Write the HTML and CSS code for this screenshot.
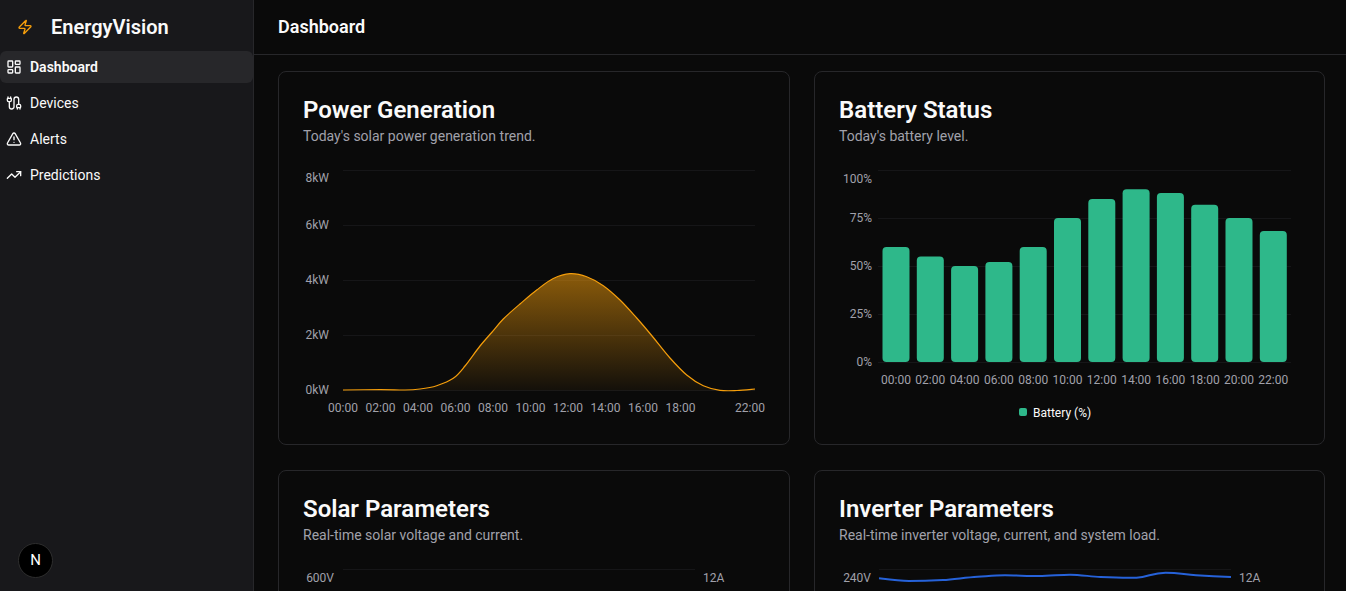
FILE: index.html
```html
<!DOCTYPE html>
<html lang="en">
<head>
    <meta charset="UTF-8">
    <meta name="viewport" content="width=device-width, initial-scale=1.0">
    <title>EnergyVision</title>
    <link rel="stylesheet" href="styles.css">
</head>
<body>
    <div class="app">
        <aside class="sidebar">
            <div class="brand">
                <svg class="brand-icon" viewBox="0 0 24 24"><path d="M4 14a1 1 0 0 1-.78-1.63l9.9-10.2a.5.5 0 0 1 .86.46l-1.92 6.02A1 1 0 0 0 13 10h7a1 1 0 0 1 .78 1.63l-9.9 10.2a.5.5 0 0 1-.86-.46l1.92-6.02A1 1 0 0 0 11 14z"/></svg>
                <span class="brand-name">EnergyVision</span>
            </div>
            <nav class="nav">
                <a class="nav-item active">
                    <svg class="nav-icon" viewBox="0 0 24 24"><rect width="7" height="9" x="3" y="3" rx="1"/><rect width="7" height="5" x="14" y="3" rx="1"/><rect width="7" height="9" x="14" y="12" rx="1"/><rect width="7" height="5" x="3" y="16" rx="1"/></svg>
                    Dashboard
                </a>
                <a class="nav-item">
                    <svg class="nav-icon" viewBox="0 0 24 24"><path d="M17 19a1 1 0 0 1-1-1v-2a2 2 0 0 1 2-2h2a2 2 0 0 1 2 2v2a1 1 0 0 1-1 1z"/><path d="M17 21v-2"/><path d="M19 14V6.5a1 1 0 0 0-7 0v11a1 1 0 0 1-7 0V10"/><path d="M21 21v-2"/><path d="M3 5V3"/><path d="M4 10a2 2 0 0 1-2-2V6a1 1 0 0 1 1-1h4a1 1 0 0 1 1 1v2a2 2 0 0 1-2 2z"/><path d="M7 5V3"/></svg>
                    Devices
                </a>
                <a class="nav-item">
                    <svg class="nav-icon" viewBox="0 0 24 24"><path d="m21.73 18-8-14a2 2 0 0 0-3.48 0l-8 14A2 2 0 0 0 4 21h16a2 2 0 0 0 1.73-3"/><path d="M12 9v4"/><path d="M12 17h.01"/></svg>
                    Alerts
                </a>
                <a class="nav-item">
                    <svg class="nav-icon" viewBox="0 0 24 24"><polyline points="22 7 13.5 15.5 8.5 10.5 2 17"/><polyline points="16 7 22 7 22 13"/></svg>
                    Predictions
                </a>
            </nav>
            <div class="next-badge">N</div>
        </aside>

        <div class="main">
            <header class="topbar">Dashboard</header>
            <div class="content">
                <section class="card">
                    <h2 class="card-title">Power Generation</h2>
                    <p class="card-desc">Today's solar power generation trend.</p>
                    <svg class="chart" viewBox="303 162 462 262">
                        <defs>
                            <linearGradient id="powerFill" x1="0" y1="0" x2="0" y2="1">
                                <stop offset="0" stop-color="#f59e0b" stop-opacity="0.55"/>
                                <stop offset="1" stop-color="#f59e0b" stop-opacity="0.04"/>
                            </linearGradient>
                        </defs>
                        <g class="grid">
                            <line x1="343" x2="755" y1="170.5" y2="170.5"/>
                            <line x1="343" x2="755" y1="225.5" y2="225.5"/>
                            <line x1="343" x2="755" y1="280.5" y2="280.5"/>
                            <line x1="343" x2="755" y1="335.5" y2="335.5"/>
                            <line x1="343" x2="755" y1="390.5" y2="390.5"/>
                        </g>
                        <path class="area" fill="url(#powerFill)" d="M343 390C349.25 390 370.2 389.6 380.5 389.6S398.4 390.1 405 390S414.7 389.7 420 389S431.2 387.5 436.7 385.7S448.6 381.6 453.3 378.3S460.6 371.4 465 366S475.5 351.6 480 346S487.8 337 491.7 332.5S498.6 323.75 503.3 319S514.4 308.8 520 304S531.1 294.25 536.7 290S547.7 281.2 553.3 278.5S564.4 274 570 273.7S581.2 274.7 586.7 276.7S597.8 281.8 603.3 285.7S614.4 294.6 620 300S631.1 311.75 636.7 318S647.8 330.8 653.3 337.5S664.4 351.75 670 358S681.2 370.4 686.7 375S697.7 383.2 703.3 385.7S714.4 389.5 720 390.3S731.2 390.7 737 390.5S752 389.25 755 389V390.5H343Z"/>
                        <path class="area-line" d="M343 390C349.25 390 370.2 389.6 380.5 389.6S398.4 390.1 405 390S414.7 389.7 420 389S431.2 387.5 436.7 385.7S448.6 381.6 453.3 378.3S460.6 371.4 465 366S475.5 351.6 480 346S487.8 337 491.7 332.5S498.6 323.75 503.3 319S514.4 308.8 520 304S531.1 294.25 536.7 290S547.7 281.2 553.3 278.5S564.4 274 570 273.7S581.2 274.7 586.7 276.7S597.8 281.8 603.3 285.7S614.4 294.6 620 300S631.1 311.75 636.7 318S647.8 330.8 653.3 337.5S664.4 351.75 670 358S681.2 370.4 686.7 375S697.7 383.2 703.3 385.7S714.4 389.5 720 390.3S731.2 390.7 737 390.5S752 389.25 755 389"/>
                        <g class="tick tick-y">
                            <text x="329" y="182">8kW</text>
                            <text x="329" y="229">6kW</text>
                            <text x="329" y="284">4kW</text>
                            <text x="329" y="339">2kW</text>
                            <text x="329" y="394">0kW</text>
                        </g>
                        <g class="tick tick-x">
                            <text x="343" y="412">00:00</text>
                            <text x="380.5" y="412">02:00</text>
                            <text x="418" y="412">04:00</text>
                            <text x="455.5" y="412">06:00</text>
                            <text x="493" y="412">08:00</text>
                            <text x="530.5" y="412">10:00</text>
                            <text x="568" y="412">12:00</text>
                            <text x="605.5" y="412">14:00</text>
                            <text x="643" y="412">16:00</text>
                            <text x="680.5" y="412">18:00</text>
                            <text x="750" y="412">22:00</text>
                        </g>
                    </svg>
                </section>

                <section class="card">
                    <h2 class="card-title">Battery Status</h2>
                    <p class="card-desc">Today's battery level.</p>
                    <svg class="chart" viewBox="839 162 461 262">
                        <g class="grid">
                            <line x1="878" x2="1291" y1="170.5" y2="170.5"/>
                            <line x1="878" x2="1291" y1="218.5" y2="218.5"/>
                            <line x1="878" x2="1291" y1="266.5" y2="266.5"/>
                            <line x1="878" x2="1291" y1="314.5" y2="314.5"/>
                            <line x1="878" x2="1291" y1="362.5" y2="362.5"/>
                        </g>
                        <g class="bars">
                            <rect x="882.5" y="247" width="27" height="115" rx="4"/>
                            <rect x="916.8" y="256.5" width="27" height="105.5" rx="4"/>
                            <rect x="951.1" y="266" width="27" height="96" rx="4"/>
                            <rect x="985.4" y="262" width="27" height="100" rx="4"/>
                            <rect x="1019.7" y="247" width="27" height="115" rx="4"/>
                            <rect x="1054" y="218" width="27" height="144" rx="4"/>
                            <rect x="1088.3" y="199" width="27" height="163" rx="4"/>
                            <rect x="1122.6" y="189.3" width="27" height="172.7" rx="4"/>
                            <rect x="1156.9" y="193" width="27" height="169" rx="4"/>
                            <rect x="1191.2" y="204.7" width="27" height="157.3" rx="4"/>
                            <rect x="1225.5" y="218" width="27" height="144" rx="4"/>
                            <rect x="1259.8" y="231" width="27" height="131" rx="4"/>
                        </g>
                        <g class="tick tick-y">
                            <text x="872" y="183">100%</text>
                            <text x="872" y="222">75%</text>
                            <text x="872" y="270">50%</text>
                            <text x="872" y="318">25%</text>
                            <text x="872" y="366">0%</text>
                        </g>
                        <g class="tick tick-x">
                            <text x="896" y="384">00:00</text>
                            <text x="930.3" y="384">02:00</text>
                            <text x="964.6" y="384">04:00</text>
                            <text x="998.9" y="384">06:00</text>
                            <text x="1033.2" y="384">08:00</text>
                            <text x="1067.5" y="384">10:00</text>
                            <text x="1101.8" y="384">12:00</text>
                            <text x="1136.1" y="384">14:00</text>
                            <text x="1170.4" y="384">16:00</text>
                            <text x="1204.7" y="384">18:00</text>
                            <text x="1239" y="384">20:00</text>
                            <text x="1273.3" y="384">22:00</text>
                        </g>
                        <rect class="legend-dot" x="1019" y="408" width="8" height="8" rx="2"/>
                        <text class="legend-label" x="1033" y="417">Battery (%)</text>
                    </svg>
                </section>

                <section class="card">
                    <h2 class="card-title">Solar Parameters</h2>
                    <p class="card-desc">Real-time solar voltage and current.</p>
                    <svg class="chart" viewBox="303 560 462 262">
                        <g class="grid">
                            <line x1="343" x2="695" y1="568.5" y2="568.5"/>
                        </g>
                        <g class="tick tick-y">
                            <text x="334" y="581">600V</text>
                        </g>
                        <text class="tick" x="703" y="581">12A</text>
                    </svg>
                </section>

                <section class="card">
                    <h2 class="card-title">Inverter Parameters</h2>
                    <p class="card-desc">Real-time inverter voltage, current, and system load.</p>
                    <svg class="chart" viewBox="839 560 461 262">
                        <g class="grid">
                            <line x1="879" x2="1231" y1="568.5" y2="568.5"/>
                        </g>
                        <path class="line-blue" d="M879 577.3C889 578.6 899 580 909 580S932 579.6 943 579S965 576.5 977.5 575.7S995 574.3 1005 574.3S1028 575 1039 575S1060 573.7 1070 573.7S1090 575.5 1100.6 576S1125 577 1136.5 576.7S1152 571.7 1165.6 571.7S1185 573.8 1196 574.3S1220 575.5 1231 576"/>
                        <g class="tick tick-y">
                            <text x="871" y="581">240V</text>
                        </g>
                        <text class="tick" x="1239" y="581">12A</text>
                    </svg>
                </section>
            </div>
        </div>
    </div>
</body>
</html>
```

FILE: styles.css
```css
* {
    box-sizing: border-box;
}

body {
    margin: 0;
    height: 100vh;
    overflow: hidden;
    font-family: Roboto, "Noto Sans", sans-serif;
    background-color: #0a0a0a;
    color: #fafafa;
}

.app {
    display: flex;
    height: 100vh;
}

.sidebar {
    position: relative;
    flex: 0 0 254px;
    background-color: #18181b;
    border-right: 1px solid #27272a;
}

.brand {
    display: flex;
    align-items: center;
    gap: 18px;
    height: 51px;
    padding: 2px 0 0 17px;
}

.brand-icon {
    width: 16px;
    height: 16px;
    fill: none;
    stroke: #f59e0b;
    stroke-width: 2;
    stroke-linecap: round;
    stroke-linejoin: round;
}

.brand-name {
    font-size: 20px;
    font-weight: 600;
}

.nav {
    display: flex;
    flex-direction: column;
    gap: 4px;
}

.nav-item {
    display: flex;
    align-items: center;
    gap: 8px;
    height: 32px;
    padding-left: 6px;
    border-radius: 6px;
    font-size: 14px;
}

.nav-item.active {
    background-color: #27272a;
    font-weight: 600;
}

.nav-icon {
    width: 16px;
    height: 16px;
    fill: none;
    stroke: currentColor;
    stroke-width: 2;
    stroke-linecap: round;
    stroke-linejoin: round;
}

.next-badge {
    position: absolute;
    left: 18px;
    top: 543px;
    width: 35px;
    height: 35px;
    border: 1px solid #2e2e2e;
    border-radius: 50%;
    background-color: #000;
    color: #fff;
    font-size: 15px;
    line-height: 33px;
    text-align: center;
}

.main {
    flex: 1;
    min-width: 0;
    overflow: hidden;
}

.topbar {
    height: 55px;
    padding: 15px 0 0 24px;
    border-bottom: 1px solid #27272a;
    font-size: 18px;
    line-height: 24px;
    font-weight: 600;
}

.content {
    display: grid;
    grid-template-columns: 512px 511px;
    column-gap: 24px;
    row-gap: 25px;
    padding: 16px 0 0 24px;
}

.card {
    border: 1px solid #27272a;
    border-radius: 8px;
    padding: 24px 24px 20px;
    background-color: #0a0a0a;
}

.card-title {
    margin: 0 0 2px;
    font-size: 24px;
    line-height: 28px;
    font-weight: 600;
}

.card-desc {
    margin: 0 0 16px;
    font-size: 14px;
    line-height: 20px;
    color: #a1a1aa;
}

.chart {
    display: block;
    width: 100%;
    height: 262px;
}

.grid line {
    stroke: #161618;
    stroke-width: 1;
}

.tick {
    font-size: 12px;
    fill: #a1a1aa;
}

.tick-y text {
    text-anchor: end;
}

.tick-x text {
    text-anchor: middle;
}

.area-line {
    fill: none;
    stroke: #f59e0b;
    stroke-width: 1.2;
}

.bars rect {
    fill: #2eb88a;
}

.legend-dot {
    fill: #2eb88a;
}

.legend-label {
    font-size: 12px;
    fill: #fafafa;
}

.line-blue {
    fill: none;
    stroke: #2662d9;
    stroke-width: 2;
}
```
